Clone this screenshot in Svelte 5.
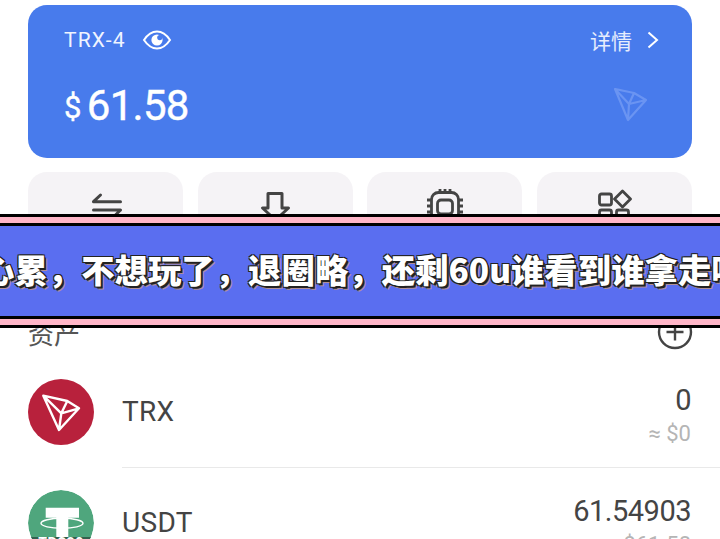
<script>
	const assets = [
		{ name: 'TRX', amount: '0', value: '≈ $0', kind: 'trx' },
		{ name: 'USDT', amount: '61.54903', value: '≈ $61.58', kind: 'usdt' }
	];
</script>

<div class="page">
	<section class="card">
		<div class="card-top">
			<div class="account">
				<span>TRX-4</span>
				<svg width="30" height="22" viewBox="0 0 30 22" fill="none" stroke="#fff" stroke-width="2">
					<path d="M2 11C6 5 10 2.5 15 2.5S24 5 28 11C24 17 20 19.5 15 19.5S6 17 2 11Z" />
					<circle cx="15" cy="11" r="5.6" fill="#fff" stroke="none" />
					<circle cx="17.8" cy="8.6" r="2.6" fill="#487bec" stroke="none" />
				</svg>
			</div>
			<div class="details">
				<span>详情</span>
				<svg width="14" height="20" viewBox="0 0 14 20" fill="none" stroke="#fff" stroke-width="2">
					<path d="M2.5 2.5L11 10L2.5 17.5" />
				</svg>
			</div>
		</div>
		<div class="card-bottom">
			<div class="balance"><span class="dollar">$</span>61.58</div>
			<svg class="watermark" width="34" height="34" viewBox="0 0 34 34" fill="none" stroke="#6a94f2" stroke-width="2.2" stroke-linejoin="round">
				<path d="M1 1L20 5L32 12L14 32Z M1 1L15 16L14 32 M15 16L32 12 M15 16L20 5" />
			</svg>
		</div>
	</section>

	<div class="actions">
		<div class="tile">
			<svg width="36" height="36" viewBox="0 0 36 36" fill="none" stroke="#444" stroke-width="3" stroke-linecap="round" stroke-linejoin="round">
				<path d="M5.5 12.7H32.5 M5.5 12.7L12.5 6 M5.5 21H32.5 M32.5 21L25.5 28" />
			</svg>
		</div>
		<div class="tile">
			<svg width="36" height="36" viewBox="0 0 36 36" fill="none" stroke="#444" stroke-width="3" stroke-linejoin="round">
				<path d="M11 4.5H25V19H31.5L18.5 31L5.5 19H11Z" />
			</svg>
		</div>
		<div class="tile">
			<svg width="38" height="36" viewBox="0 0 38 36" fill="none" stroke="#444" stroke-width="2.8">
				<rect x="5.5" y="3.5" width="27" height="28" rx="7" />
				<rect x="11.5" y="11" width="15" height="14" rx="3.5" />
				<path d="M14 0V3 M19 0V3 M24 0V3 M1 11H5 M1 17H5 M1 23H5 M33 11H37 M33 17H37 M33 23H37" />
			</svg>
		</div>
		<div class="tile">
			<svg width="36" height="36" viewBox="0 0 36 36" fill="none" stroke="#444" stroke-width="2.8">
				<rect x="3.5" y="5" width="12" height="11" rx="2" />
				<path d="M26.5 2L34.5 10L26.5 18L18.5 10Z" stroke-linejoin="round" />
				<rect x="3.5" y="21" width="12" height="11" rx="2" />
				<rect x="20.5" y="21" width="12" height="11" rx="2" />
			</svg>
		</div>
	</div>

	<div class="assets-head">
		<span>资产</span>
		<svg width="36" height="36" viewBox="0 0 36 36" fill="none" stroke="#444" stroke-width="2.4">
			<circle cx="18" cy="18" r="16" />
			<path d="M9.5 18H26.5 M18 9.5V26.5" />
		</svg>
	</div>

	{#each assets as asset, i}
		<div class="row">
			{#if asset.kind === 'trx'}
				<svg class="coin" width="66" height="66" viewBox="0 0 66 66">
					<circle cx="33" cy="33" r="33" fill="#b8213c" />
					<path d="M15.3 16.7L39.3 22L51 29.3L31 51Z M15.3 16.7L33.3 34.3L31 51 M33.3 34.3L51 29.3 M33.3 34.3L39.3 22" fill="none" stroke="#fff" stroke-width="2.4" stroke-linejoin="round" />
				</svg>
			{:else}
				<div class="coin usdt">
					<svg width="66" height="66" viewBox="0 0 66 66">
						<circle cx="33" cy="33" r="33" fill="#4fa67d" />
						<path d="M17.7 17.7H51V27.7H40.3V47H28.3V27.7H17.7Z" fill="#fff" />
						<ellipse cx="34" cy="33.3" rx="21" ry="5" fill="none" stroke="#fff" stroke-width="1.4" />
					</svg>
					<span class="chain">TRC20</span>
				</div>
			{/if}
			<div class="row-body" class:divided={i > 0}>
				<span class="name">{asset.name}</span>
				<div class="figures">
					<div class="amount">{asset.amount}</div>
					<div class="value">{asset.value}</div>
				</div>
			</div>
		</div>
	{/each}

	<div class="banner">
		<div class="banner-inner">
			<div class="banner-text">心累，不想玩了，退圈略，还剩60u谁看到谁拿走吧</div>
		</div>
	</div>
</div>

<style>
	:global(body) {
		background: #fff;
		overflow: hidden;
	}
	.page {
		position: relative;
		box-sizing: border-box;
		width: 720px;
		height: 539px;
		padding: 5px 0 0 28px;
		overflow: hidden;
		font-family: Roboto, "Noto Sans CJK SC", sans-serif;
		color: #444;
	}
	.card {
		box-sizing: border-box;
		width: 664px;
		height: 153px;
		padding: 21px 32px 0 36px;
		border-radius: 19px;
		background: #487bec;
		color: #fff;
	}
	.card-top {
		display: flex;
		justify-content: space-between;
		align-items: center;
		height: 28px;
	}
	.account {
		display: flex;
		align-items: center;
		gap: 16px;
		font-size: 21px;
		letter-spacing: 1.2px;
		color: #f0f4ff;
	}
	.details {
		display: flex;
		align-items: center;
		gap: 14px;
		font-size: 21px;
		color: #e6edfd;
	}
	.card-bottom {
		display: flex;
		justify-content: space-between;
		align-items: flex-start;
		margin-top: 28px;
	}
	.balance {
		font-size: 42px;
		line-height: 48px;
		letter-spacing: -0.7px;
		-webkit-text-stroke: 0.4px #fff;
	}
	.dollar {
		font-size: 31px;
		margin-right: 6px;
		vertical-align: 2px;
	}
	.watermark {
		margin-right: 12px;
		margin-top: 6px;
	}
	.actions {
		display: grid;
		grid-template-columns: repeat(4, 1fr);
		column-gap: 14.67px;
		width: 664px;
		margin-top: 14px;
	}
	.tile {
		display: flex;
		justify-content: center;
		align-items: flex-start;
		box-sizing: border-box;
		height: 120px;
		padding-top: 17px;
		border-radius: 19px;
		background: #f5f3f6;
	}
	.assets-head {
		display: flex;
		justify-content: space-between;
		align-items: center;
		width: 665px;
		margin-top: 20px;
		margin-bottom: 5px;
		height: 40px;
		font-size: 26px;
		color: #555;
	}
	.row {
		display: flex;
		align-items: stretch;
		gap: 28px;
		height: 110px;
	}
	.coin {
		flex: none;
		margin-top: 22px;
	}
	.usdt {
		position: relative;
		width: 66px;
		height: 66px;
		margin-top: 23px;
		border-radius: 50%;
		overflow: hidden;
	}
	.chain {
		position: absolute;
		left: 0;
		right: 0;
		bottom: 0;
		height: 19px;
		background: #33614d;
		color: #fff;
		font-size: 14px;
		font-weight: 700;
		letter-spacing: 0.5px;
		line-height: 13px;
		text-align: center;
	}
	.row-body {
		flex: 1;
		display: flex;
		justify-content: space-between;
		align-items: flex-start;
		padding: 0 29px 0 0;
	}
	.row-body.divided {
		border-top: 1px solid #e9e9e9;
	}
	.name {
		margin-top: 36px;
		font-size: 28px;
		letter-spacing: 0.3px;
		line-height: 38px;
	}
	.figures {
		margin-top: 26px;
		text-align: right;
	}
	.amount {
		font-size: 29px;
		line-height: 34px;
		letter-spacing: -0.5px;
	}
	.value {
		margin-top: 4px;
		font-size: 22px;
		line-height: 26px;
		color: #b5b5b5;
	}
	.banner {
		position: absolute;
		left: 0;
		right: 0;
		top: 214px;
		height: 114px;
		box-sizing: border-box;
		padding: 6px 0;
		border-top: 3px solid #000;
		border-bottom: 3px solid #000;
		background: #ffb6c8;
		display: flex;
	}
	.banner-inner {
		flex: 1;
		display: flex;
		align-items: center;
		border-top: 3px solid #000;
		border-bottom: 3px solid #000;
		background: #5a6ef0;
		overflow: hidden;
	}
	.banner-text {
		flex: none;
		margin-left: -19px;
		margin-top: -5px;
		white-space: nowrap;
		font-family: "Noto Sans CJK SC", sans-serif;
		font-size: 33.4px;
		font-weight: 900;
		color: #fff;
		text-shadow:
			-1px -1px 0 #222, 1px -1px 0 #222, -1px 1px 0 #222, 1px 1px 0 #222,
			2px 2px 0 #222, 3px 3px 0 #b08f97;
	}
</style>
